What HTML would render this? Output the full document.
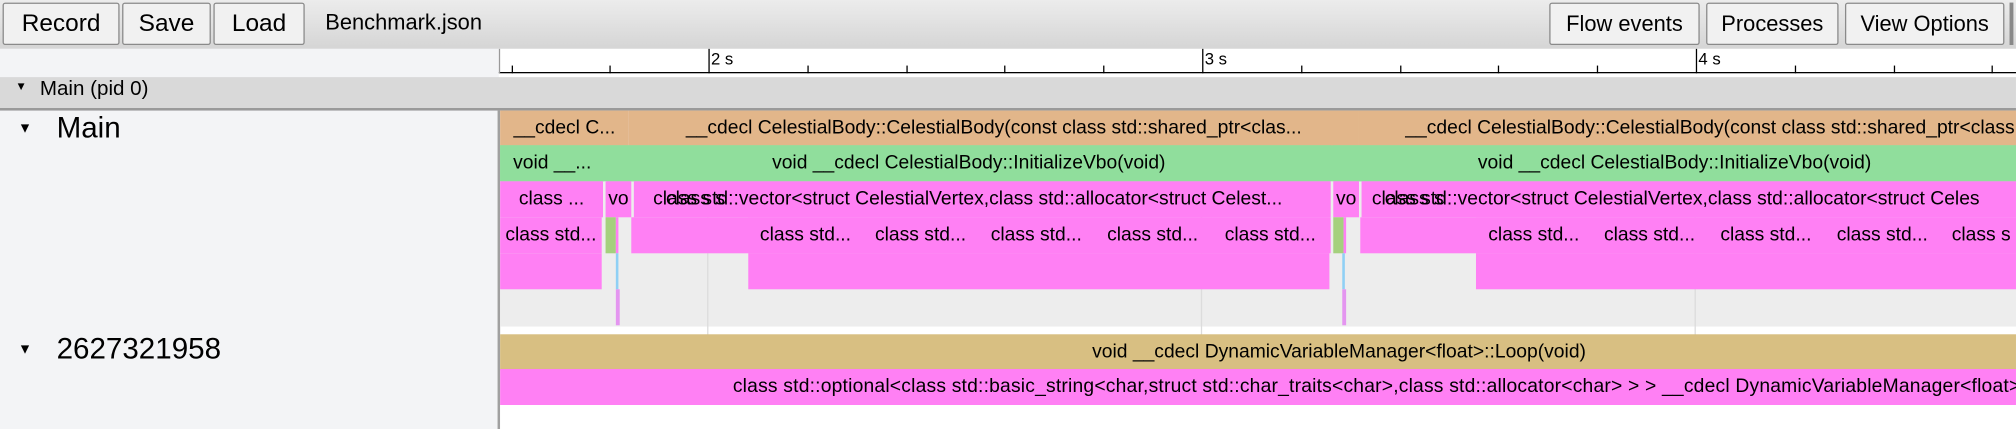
<!DOCTYPE html>
<html><head><meta charset="utf-8"><style>
*{margin:0;padding:0;box-sizing:border-box}
html,body{width:2016px;height:429px;overflow:hidden;background:#fff}
#s{position:absolute;left:0;top:0;width:1568px;height:334px;transform:scale(1.2857);transform-origin:0 0;font-family:"Liberation Sans",sans-serif;color:#000}
.a{position:absolute}
.btn{position:absolute;top:2px;height:33px;border:1px solid #8a8a8a;border-radius:2px;background:#f1f1f1;font-size:19px;line-height:31px;text-align:center}
.b{position:absolute;height:28px;font-size:15px;line-height:28px;text-align:center;white-space:nowrap;overflow:hidden}
.o{background:#e2b68a}.g{background:#90de9c}.p{background:#ff80f4}.t{background:#d8bf82}
</style></head><body><div id="s">
<div class="a" style="left:0;top:0;width:1568px;height:38px;background:linear-gradient(#ececec,#d5d5d5)"></div>
<div class="btn" style="left:2px;width:91px">Record</div>
<div class="btn" style="left:95px;width:69px">Save</div>
<div class="btn" style="left:166px;width:71px">Load</div>
<div class="a" style="left:253px;top:8px;font-size:17px">Benchmark.json</div>
<div class="btn" style="left:1205px;width:117px;font-size:17px">Flow events</div>
<div class="btn" style="left:1327px;width:103px;font-size:17px">Processes</div>
<div class="btn" style="left:1435px;width:124px;font-size:17px">View Options</div>
<div class="a" style="left:1563px;top:2px;width:3px;height:33px;background:#888"></div>
<div class="a" style="left:0;top:38px;width:388px;height:296px;background:#f3f4f6"></div>
<div class="a" style="left:388px;top:38px;width:1180px;height:21px;background:#fff"></div>
<div class="a" style="left:388px;top:56px;width:1180px;height:1px;background:#000"></div>
<div class="a" style="left:388px;top:38px;width:1px;height:19px;background:#999"></div>
<div id="ticks"></div>
<div class="a" style="left:553px;top:38px;font-size:13px">2 s</div>
<div class="a" style="left:937px;top:38px;font-size:13px">3 s</div>
<div class="a" style="left:1321px;top:38px;font-size:13px">4 s</div>
<div class="a" style="left:0;top:60px;width:1568px;height:24px;background:#d9d9d9"></div>
<div class="a" style="left:0;top:84px;width:1568px;height:2px;background:#9a9a9a"></div>
<div class="a" style="left:12px;top:62px;font-size:9px">▼</div>
<div class="a" style="left:31px;top:61px;font-size:16px">Main (pid 0)</div>
<div class="a" style="left:387px;top:86px;width:2px;height:248px;background:#a0a0a0"></div>
<div class="a" style="left:14px;top:94px;font-size:11px">▼</div>
<div class="a" style="left:44px;top:86px;font-size:23px">Main</div>
<div class="a" style="left:14px;top:266px;font-size:11px">▼</div>
<div class="a" style="left:44px;top:258px;font-size:23px">2627321958</div>
<div class="a" style="left:389px;top:86px;width:1179px;height:168px;background:#ededed"></div>
<div class="a" style="left:550px;top:86px;width:1px;height:248px;background:#dcdcdc"></div>
<div class="a" style="left:934px;top:86px;width:1px;height:248px;background:#dcdcdc"></div>
<div class="a" style="left:1318px;top:86px;width:1px;height:248px;background:#dcdcdc"></div>
<div class="b o" style="left:389px;top:86px;width:100px">__cdecl C...</div>
<div class="b o" style="left:489px;top:86px;width:568px">__cdecl CelestialBody::CelestialBody(const class std::shared_ptr&lt;clas...</div>
<div class="b o" style="left:1057px;top:86px;width:511px;text-align:left;padding-left:36px">__cdecl CelestialBody::CelestialBody(const class std::shared_ptr&lt;class</div>
<div class="b g" style="left:389px;top:113px;width:1179px"></div>
<div class="b g" style="left:389px;top:113px;width:81px">void __...</div>
<div class="b g" style="left:472px;top:113px;width:563px">void __cdecl CelestialBody::InitializeVbo(void)</div>
<div class="b g" style="left:1037px;top:113px;width:531px">void __cdecl CelestialBody::InitializeVbo(void)</div>
<div class="b p" style="left:389px;top:141px;width:80px">class ...</div>
<div class="b p" style="left:471px;top:141px;width:20px">vo</div>
<div class="b p" style="left:493px;top:141px;width:542px"></div>
<div class="b" style="left:493px;top:141px;width:542px;text-align:left;padding-left:15px">class std::vector&lt;struct CelestialVertex,class std::allocator&lt;struct Celest...</div>
<div class="b" style="left:493px;top:141px;width:100px;text-align:left;padding-left:25px;background:transparent">class s</div>
<div class="b p" style="left:1037px;top:141px;width:20px">vo</div>
<div class="b p" style="left:1059px;top:141px;width:509px;text-align:left;padding-left:8px">class std::vector&lt;struct CelestialVertex,class std::allocator&lt;struct Celes</div>
<div class="b" style="left:1059px;top:141px;width:100px;text-align:left;padding-left:18px">class s</div>
<div class="b p" style="left:389px;top:169px;width:79px">class std...</div>
<div class="b g" style="left:471px;top:169px;width:8px;background:#a5d07e"></div>
<div class="b p" style="left:479px;top:169px;width:2px"></div>
<div class="b p" style="left:491px;top:169px;width:544px"></div>
<div class="b p" style="left:582px;top:169px;width:89px">class std...</div>
<div class="b p" style="left:671px;top:169px;width:90px">class std...</div>
<div class="b p" style="left:761px;top:169px;width:90px">class std...</div>
<div class="b p" style="left:851px;top:169px;width:91px">class std...</div>
<div class="b p" style="left:942px;top:169px;width:92px">class std...</div>
<div class="b g" style="left:1037px;top:169px;width:8px;background:#a5d07e"></div>
<div class="b p" style="left:1045px;top:169px;width:2px"></div>
<div class="b p" style="left:1058px;top:169px;width:510px"></div>
<div class="b p" style="left:1148px;top:169px;width:90px">class std...</div>
<div class="b p" style="left:1238px;top:169px;width:90px">class std...</div>
<div class="b p" style="left:1328px;top:169px;width:91px">class std...</div>
<div class="b p" style="left:1419px;top:169px;width:90px">class std...</div>
<div class="b p" style="left:1509px;top:169px;width:59px;text-align:left;padding-left:9px">class s</div>
<div class="b p" style="left:389px;top:197px;width:79px"></div>
<div class="b" style="left:479px;top:197px;width:2px;background:#8fd0f5"></div>
<div class="b p" style="left:582px;top:197px;width:452px"></div>
<div class="b" style="left:1044px;top:197px;width:2px;background:#8fd0f5"></div>
<div class="b p" style="left:1148px;top:197px;width:420px"></div>
<div class="b" style="left:479px;top:225px;width:3px;background:#e495f0"></div>
<div class="b" style="left:1044px;top:225px;width:3px;background:#e495f0"></div>
<div class="b t" style="left:389px;top:260px;width:1179px;text-indent:126px">void __cdecl DynamicVariableManager&lt;float&gt;::Loop(void)</div>
<div class="b p" style="left:389px;top:287px;width:1179px;text-align:left;padding-left:181px;letter-spacing:0.15px">class std::optional&lt;class std::basic_string&lt;char,struct std::char_traits&lt;char&gt;,class std::allocator&lt;char&gt; &gt; &gt; __cdecl DynamicVariableManager&lt;float&gt;::Loop(void)</div>
<div class="a" style="left:389px;top:315px;width:1179px;height:19px;background:#fff"></div>
</div>
<script>
var t=document.getElementById('ticks'),h='';
for(var x=397.5;x<1568;x+=76.8){var r=((x-550)/384)%1;var maj=Math.abs(r)<0.01||Math.abs(r-1)<0.01||Math.abs(r+1)<0.01;
h+='<div class="a" style="left:'+Math.round(x)+'px;top:'+(maj?38:51)+'px;width:1px;height:'+(maj?19:6)+'px;background:#000"></div>';}
t.innerHTML=h;
</script>
</body></html>
